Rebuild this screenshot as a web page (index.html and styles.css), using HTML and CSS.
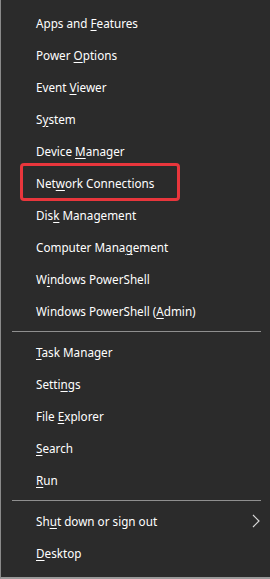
FILE: index.html
```html
<!DOCTYPE html>
<html>
<head>
<meta charset="utf-8">
<link rel="stylesheet" href="styles.css">
</head>
<body>
<div class="menu">
  <div class="item"><span>Apps and <u>F</u>eatures</span></div>
  <div class="item"><span>Power <u>O</u>ptions</span></div>
  <div class="item"><span>Event <u>V</u>iewer</span></div>
  <div class="item"><span>S<u>y</u>stem</span></div>
  <div class="item"><span>Device <u>M</u>anager</span></div>
  <div class="item"><span>Net<u>w</u>ork Connections</span><span class="redbox"></span></div>
  <div class="item"><span>Dis<u>k</u> Management</span></div>
  <div class="item"><span>Computer Mana<u>g</u>ement</span></div>
  <div class="item"><span>W<u>i</u>ndows PowerShell</span></div>
  <div class="item"><span>Windows PowerShell (<u>A</u>dmin)</span></div>
  <div class="sep"></div>
  <div class="item"><span><u>T</u>ask Manager</span></div>
  <div class="item"><span>Setti<u>n</u>gs</span></div>
  <div class="item"><span>File <u>E</u>xplorer</span></div>
  <div class="item"><span><u>S</u>earch</span></div>
  <div class="item"><span><u>R</u>un</span></div>
  <div class="sep"></div>
  <div class="item submenu"><span>Sh<u>u</u>t down or sign out</span>
    <svg class="chev" width="8" height="14" viewBox="0 0 8 14"><path d="M1 1 L7 7 L1 13" fill="none" stroke="#d8d8d8" stroke-width="1.2"/></svg>
  </div>
  <div class="item"><span><u>D</u>esktop</span></div>
</div>
</body>
</html>
```
FILE: styles.css
```css
html, body {
  margin: 0;
  padding: 0;
  background: #2b2b2b;
}
.menu {
  width: 270px;
  height: 579px;
  box-sizing: border-box;
  background: #2b2b2b;
  border-left: 1px solid #8a8a8a;
  border-bottom: 2px solid #9a9a9a;
  padding-top: 7px;
  font-family: "Segoe UI", "Noto Sans", "Open Sans", sans-serif;
  font-size: 11.7px;
  color: #ffffff;
}
.item {
  position: relative;
  height: 32px;
  display: flex;
  align-items: center;
  padding-left: 35px;
  white-space: pre;
}
.item u {
  text-decoration-thickness: 1px;
  text-underline-offset: 2px;
}
.sep {
  height: 1px;
  background: #8f8f8f;
  margin: 4px 9px 4px 11px;
}
.submenu {
  justify-content: space-between;
  padding-right: 10px;
}
.chev {
  display: block;
}
.redbox {
  position: absolute;
  left: 19px;
  top: -4px;
  width: 160px;
  height: 38px;
  box-sizing: border-box;
  border: 3px solid #e8363c;
  border-radius: 4px;
}
```
